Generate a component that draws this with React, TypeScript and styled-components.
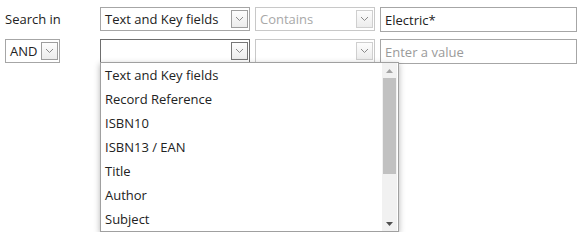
import React from 'react'
import styled, { createGlobalStyle } from 'styled-components'

const GlobalStyle = createGlobalStyle`
    body {
        margin: 0;
        background: #ffffff;
        font-family: "Open Sans", "Noto Sans", sans-serif;
        font-size: 13px;
        color: #222222;
    }
`

const Page = styled.div`
    padding: 7px 10px 0 5px;
    display: grid;
    grid-template-columns: 90px 150px 120px 197px;
    grid-template-rows: 25px 24px auto;
    column-gap: 5px;
    row-gap: 7px;
`

const Label = styled.div`
    display: flex;
    align-items: center;
    height: 24px;
    color: #222222;
`

const SelectBox = styled.div<{ $width?: number; $disabled?: boolean; $focused?: boolean }>`
    box-sizing: border-box;
    width: ${p => (p.$width ? `${p.$width}px` : '100%')};
    height: 24px;
    display: flex;
    align-items: center;
    justify-content: space-between;
    border: 1px solid ${p => (p.$focused ? '#6e6e6e' : p.$disabled ? '#c8c8c8' : '#a6a6a6')};
    padding-left: 4px;
    padding-right: 1px;
    color: ${p => (p.$disabled ? '#a8a8a8' : '#222222')};
    white-space: nowrap;
    background: #ffffff;
`

const ArrowBox = styled.span<{ $disabled?: boolean; $focused?: boolean }>`
    box-sizing: border-box;
    width: 17px;
    height: 18px;
    display: flex;
    align-items: center;
    justify-content: center;
    border: 1px solid ${p => (p.$focused ? '#777777' : p.$disabled ? '#cfcfcf' : '#9e9e9e')};
    background: linear-gradient(#fdfdfd, #ececec);
    svg {
        display: block;
    }
`

const TextField = styled.div<{ $placeholder?: boolean }>`
    box-sizing: border-box;
    height: 25px;
    display: flex;
    align-items: center;
    padding-left: 4px;
    border: 1px solid #a6a6a6;
    color: ${p => (p.$placeholder ? '#9a9a9a' : '#222222')};
    background: #ffffff;
`

const ListBox = styled.div`
    grid-column: 2 / span 3;
    grid-row: 3;
    margin-top: -8px;
    width: 299px;
    height: 170px;
    box-sizing: border-box;
    border: 1px solid #a0a0a0;
    background: #ffffff;
    box-shadow: 0 2px 6px rgba(0, 0, 0, 0.3);
    display: flex;
    position: relative;
    z-index: 5;
`

const OptionList = styled.ul`
    list-style: none;
    margin: 0;
    padding: 0;
    flex: 1;
`

const OptionItem = styled.li`
    height: 24px;
    line-height: 24px;
    padding-left: 4px;
    color: #222222;
`

const Scrollbar = styled.div`
    width: 15px;
    background: #f1f1f1;
    display: flex;
    flex-direction: column;
    align-items: center;
    margin-right: 1px;
`

const ScrollArrow = styled.div<{ $dim?: boolean }>`
    height: 15px;
    width: 100%;
    display: flex;
    align-items: center;
    justify-content: center;
    color: ${p => (p.$dim ? '#a3a3a3' : '#505050')};
`

const Thumb = styled.div`
    width: 13px;
    height: 96px;
    background: #c1c1c1;
`

const Track = styled.div`
    flex: 1;
`

const Chevron = () => (
    <svg width="9" height="6" viewBox="0 0 9 6">
        <polyline points="1,1 4.5,4.5 8,1" fill="none" stroke="#8a8a8a" strokeWidth="1" />
    </svg>
)

const Tri = ({ up }: { up?: boolean }) => (
    <svg width="7" height="4" viewBox="0 0 7 4">
        <polygon points={up ? '0,4 7,4 3.5,0' : '0,0 7,0 3.5,4'} fill="currentColor" />
    </svg>
)

interface SelectProps {
    value?: string
    width?: number
    disabled?: boolean
    focused?: boolean
}

const Select: React.FC<SelectProps> = ({ value, width, disabled, focused }) => (
    <SelectBox $width={width} $disabled={disabled} $focused={focused}>
        <span>{value}</span>
        <ArrowBox $disabled={disabled} $focused={focused}>
            <Chevron />
        </ArrowBox>
    </SelectBox>
)

const fields = ['Text and Key fields', 'Record Reference', 'ISBN10', 'ISBN13 / EAN', 'Title', 'Author', 'Subject']

export default function App() {
    return (
        <>
            <GlobalStyle />
            <Page>
                <Label>Search in</Label>
                <Select value="Text and Key fields" />
                <Select value="Contains" disabled />
                <TextField>Electric*</TextField>

                <Select value="AND" width={55} />
                <Select focused />
                <Select disabled />
                <TextField $placeholder>Enter a value</TextField>

                <ListBox>
                    <OptionList>
                        {fields.map(f => (
                            <OptionItem key={f}>{f}</OptionItem>
                        ))}
                    </OptionList>
                    <Scrollbar>
                        <ScrollArrow $dim>
                            <Tri up />
                        </ScrollArrow>
                        <Thumb />
                        <Track />
                        <ScrollArrow>
                            <Tri />
                        </ScrollArrow>
                    </Scrollbar>
                </ListBox>
            </Page>
        </>
    )
}
